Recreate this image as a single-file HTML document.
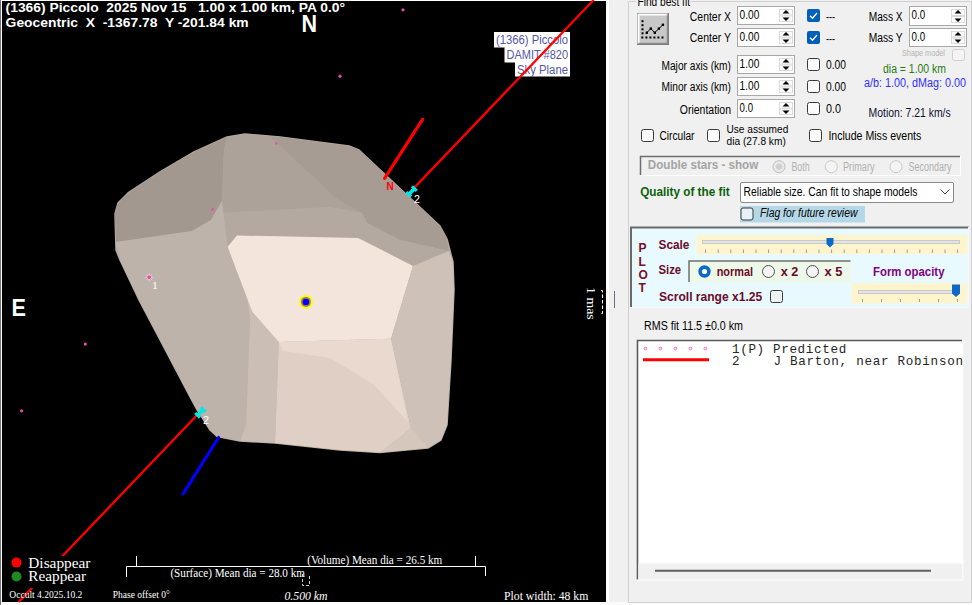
<!DOCTYPE html>
<html><head><meta charset="utf-8">
<style>
html,body{margin:0;padding:0;width:972px;height:605px;overflow:hidden;background:#f0f0f0;}
svg{display:block;}
</style></head><body>
<svg width="972" height="605" viewBox="0 0 972 605">
<rect x="0" y="0" width="606" height="605" fill="#ffffff" />
<rect x="0" y="0" width="1" height="605" fill="#7a6f7a" />
<rect x="2" y="1" width="604" height="601" fill="#000" />
<g>
<rect x="494" y="32" width="76" height="15.5" fill="#fff" />
<rect x="504.5" y="47" width="65.5" height="15.5" fill="#fff" />
<rect x="515" y="62" width="55" height="14.5" fill="#fff" />
<text x="496.00" y="44.00" font-family="Liberation Sans" font-size="12" fill="#5656a6" textLength="72.03" lengthAdjust="spacingAndGlyphs" xml:space="preserve" >(1366) Piccolo</text>
<text x="506.50" y="58.50" font-family="Liberation Sans" font-size="12" fill="#5656a6" textLength="61.50" lengthAdjust="spacingAndGlyphs" xml:space="preserve" >DAMIT #820</text>
<text x="517.00" y="73.50" font-family="Liberation Sans" font-size="12" fill="#5656a6" textLength="50.97" lengthAdjust="spacingAndGlyphs" xml:space="preserve" >Sky Plane</text>
</g>
<line x1="593.6" y1="0" x2="18.6" y2="602" stroke="#ff0000" stroke-width="2.3"/>
<g id="ast" stroke-linejoin="round">
<polygon fill="#b4a9a0" stroke="#b4a9a0" stroke-width="1.5" points="115,214 118,203 128,193 160,172 194,152 227,137 245,134 280,137 349,146 359,150 440,226 447,239 453,262 454,290 451,360 447,425 441,440 428,448 380,452.5 340,450 275,443 240,441 217,436.5 210,430 196,408 189,395 139,300 120,260 116,250"/>
<polygon fill="#a3988f" points="116,242 115,214 118,203 128,193 160,172 194,152 227,137 224,150 222,201 211,220 192,231"/>
<polygon fill="#ada29a" points="227,137 245,134 270,136.5 337,199 362,213 330,207 221,213 224,150"/>
<polygon fill="#a79c94" points="270,136.5 280,137 349,146 359,150 440,226 447,239 449,251 400,240 367,223 362,213 337,199"/>
<polygon fill="#b4a9a1" points="221,213 330,207 362,213 367,223 400,240 449,251 413,266 376,247 358,238 237,235.5 227.6,246.7"/>
<polygon fill="#beb3aa" points="116,242 192,231 211,220 222,201 227.6,246.7 246,290 250,318 246,425 240,441 217,436.5 210,430 196,408 189,395 139,300 120,260"/>
<polygon fill="#cbbeb4" points="252.4,312 278.8,342 275,443 240,441 246,425 250,318 246,290"/>
<polygon fill="#f4e5dc" points="227.6,246.7 237,235.5 358,238 376,247 413,266 391,338.7 278.8,342 252.4,312"/>
<polygon fill="#dfcfc5" points="278.8,342 391,338.7 411,428 397,440 380,452.5 340,450 275,443"/>
<polygon fill="#e9d9cf" points="278.8,342 391,338.7 408,422 373,384 330,358 283,351"/>
<polygon fill="#cec1b7" points="413,266 449,251 453,262 454,290 451,360 447,425 441,440 428,448 397,440 411,428 391,338.7"/>
<polygon fill="#d6c7bd" points="397,440 411,428 428,448 380,452.5"/>
</g>

<g fill="#e050a8"><circle cx="403" cy="9.8" r="1.6"/><circle cx="340" cy="76.2" r="1.6"/><circle cx="85.3" cy="344.1" r="1.6"/><circle cx="21.6" cy="410.8" r="1.6"/><circle cx="276.3" cy="143.5" r="1.3"/><circle cx="212.7" cy="209.4" r="1.3"/></g>
<line x1="422.7" y1="119.2" x2="384.6" y2="178.4" stroke="#ff0000" stroke-width="3.2" stroke-linecap="round"/>
<text x="386.60" y="190.00" font-family="Liberation Sans" font-size="10" fill="#ff0000" font-weight="bold" textLength="7.22" lengthAdjust="spacingAndGlyphs" xml:space="preserve" >N</text>
<line x1="218.6" y1="437.5" x2="183" y2="494" stroke="#0000ff" stroke-width="3.2" stroke-linecap="round"/>
<g fill="#00e8e8"><g transform="translate(411.6,191.4) rotate(-46)"><rect x="-4.5" y="-1.8" width="9" height="3.6"/><rect x="-5.5" y="-3.3" width="3" height="6.6"/><rect x="2.5" y="-3.3" width="3" height="6.6"/></g><g transform="translate(200.4,412.4) rotate(-46)"><rect x="-4.5" y="-1.8" width="9" height="3.6"/><rect x="-5.5" y="-3.3" width="3" height="6.6"/><rect x="2.5" y="-3.3" width="3" height="6.6"/></g></g>
<text x="414.00" y="202.60" font-family="Liberation Sans" font-size="10" fill="#fff" textLength="5.91" lengthAdjust="spacingAndGlyphs" xml:space="preserve" >2</text>
<text x="203.00" y="424.00" font-family="Liberation Sans" font-size="10" fill="#fff" textLength="6.01" lengthAdjust="spacingAndGlyphs" xml:space="preserve" >2</text>
<g transform="translate(149.2,277.3)" stroke="#f0d0f0" stroke-width="0.8"><line x1="-4" y1="0" x2="4" y2="0"/><line x1="-3" y1="-3" x2="3" y2="3"/><line x1="-3" y1="3" x2="3" y2="-3"/><line x1="0" y1="-4" x2="0" y2="4"/></g><circle cx="149.2" cy="277.3" r="1.8" fill="#ff40a0"/>
<text x="152.00" y="288.80" font-family="Liberation Serif" font-size="11" fill="#fff" textLength="5.80" lengthAdjust="spacingAndGlyphs" xml:space="preserve" >1</text>
<circle cx="305.9" cy="301.9" r="7" fill="#ffff00"/><circle cx="305.9" cy="301.9" r="5" fill="#a07868"/><circle cx="305.9" cy="301.9" r="3.2" fill="#0000ff"/>
<text x="5.60" y="11.50" font-family="Liberation Sans" font-size="13.5" fill="#fff" font-weight="bold" textLength="339.40" lengthAdjust="spacingAndGlyphs" xml:space="preserve" >(1366) Piccolo  2025 Nov 15   1.00 x 1.00 km, PA 0.0°</text>
<text x="5.60" y="27.40" font-family="Liberation Sans" font-size="13.5" fill="#fff" font-weight="bold" textLength="243.09" lengthAdjust="spacingAndGlyphs" xml:space="preserve" >Geocentric  X  -1367.78  Y -201.84 km</text>
<text x="301.60" y="31.70" font-family="Liberation Sans" font-size="23.5" fill="#fff" font-weight="bold" textLength="15.55" lengthAdjust="spacingAndGlyphs" xml:space="preserve" >N</text>
<text x="11.60" y="316.00" font-family="Liberation Sans" font-size="23.5" fill="#fff" font-weight="bold" textLength="14.44" lengthAdjust="spacingAndGlyphs" xml:space="preserve" >E</text>
<g transform="translate(587,287) rotate(90)">
<text x="0.00" y="0.00" font-family="Liberation Serif" font-size="12" fill="#fff" textLength="32.71" lengthAdjust="spacingAndGlyphs" xml:space="preserve" >1 mas</text>
</g>
<path d="M601,290.5 H602.5 V313.5 H601" stroke="#ffffff" stroke-width="1" fill="none" stroke-dasharray="3.5,2"/>
<rect x="8" y="556" width="90" height="32" fill="#000" />
<circle cx="16.5" cy="562.6" r="5" fill="#ff0000"/><circle cx="16.5" cy="576.5" r="5" fill="#208a20"/>
<text x="28.30" y="567.50" font-family="Liberation Serif" font-size="14" fill="#fff" textLength="62.18" lengthAdjust="spacingAndGlyphs" xml:space="preserve" >Disappear</text>
<text x="28.30" y="581.40" font-family="Liberation Serif" font-size="14" fill="#fff" textLength="57.71" lengthAdjust="spacingAndGlyphs" xml:space="preserve" >Reappear</text>
<text x="9.30" y="597.50" font-family="Liberation Serif" font-size="11" fill="#fff" textLength="73.10" lengthAdjust="spacingAndGlyphs" xml:space="preserve" >Occult 4.2025.10.2</text>
<text x="112.70" y="597.50" font-family="Liberation Serif" font-size="11" fill="#fff" textLength="57.12" lengthAdjust="spacingAndGlyphs" xml:space="preserve" >Phase offset 0°</text>
<text x="284.50" y="600.40" font-family="Liberation Serif" font-size="13" fill="#fff" font-style="italic" textLength="43.01" lengthAdjust="spacingAndGlyphs" xml:space="preserve" >0.500 km</text>
<text x="504.00" y="600.00" font-family="Liberation Serif" font-size="13" fill="#fff" textLength="84.30" lengthAdjust="spacingAndGlyphs" xml:space="preserve" >Plot width: 48 km</text>
<g stroke="#fff" stroke-width="1" fill="none"><polyline points="126.5,577 126.5,566.5 485.5,566.5 485.5,576"/><line x1="136.5" y1="556" x2="136.5" y2="566"/><line x1="475.5" y1="556" x2="475.5" y2="566"/></g>
<text x="170.40" y="577.00" font-family="Liberation Serif" font-size="12" fill="#fff" textLength="134.60" lengthAdjust="spacingAndGlyphs" xml:space="preserve" >(Surface) Mean dia = 28.0 km</text>
<text x="307.20" y="563.80" font-family="Liberation Serif" font-size="12" fill="#fff" textLength="135.09" lengthAdjust="spacingAndGlyphs" xml:space="preserve" >(Volume) Mean dia = 26.5 km</text>
<path d="M302.5,574 v11.5 h7 v-11.5" stroke="#ccc" stroke-width="1" fill="none" stroke-dasharray="3,2"/>
<rect x="606" y="0" width="366" height="605" fill="#f0f0f0" />
<rect x="606" y="0" width="3" height="602" fill="#ffffff" />
<rect x="606" y="602" width="366" height="3" fill="#fbfbfb" />
<path d="M636,1.5 H628.5 V602.5 H971.5 V1.5 H690.5" stroke="#d0d0d0" stroke-width="1" fill="none"/>
<text x="637.50" y="5.80" font-family="Liberation Sans" font-size="12" fill="#000" textLength="52.49" lengthAdjust="spacingAndGlyphs" xml:space="preserve" >Find best fit</text>
<line x1="614.5" y1="291" x2="614.5" y2="308" stroke="#6a7280" stroke-width="1"/>
<rect x="637.5" y="13.5" width="31" height="31" fill="#c8c8c8" stroke="#7a7a7a"/>
<path d="M638.5,43.5 V14.5 H667.5" stroke="#fff" stroke-width="2" fill="none"/>
<path d="M638.5,43.5 H667.5 V14.5" stroke="#8a8a8a" stroke-width="1.5" fill="none"/>
<g fill="#000"><rect x="641.5" y="20.2" width="2" height="2"/><rect x="641.5" y="24.2" width="2" height="2"/><rect x="641.5" y="28.3" width="2" height="2"/><rect x="641.5" y="32.3" width="2" height="2"/><rect x="641.3" y="36.5" width="2" height="2"/><rect x="645.4" y="36.5" width="2" height="2"/><rect x="649.4" y="36.5" width="2" height="2"/><rect x="653.4" y="36.5" width="2" height="2"/><rect x="657.4" y="36.5" width="2" height="2"/><rect x="661.5" y="36.5" width="2" height="2"/></g>
<polyline points="646.8,32.7 650.8,28.6 654.8,32.7 658.9,28.6 662.9,24.8" stroke="#000" stroke-width="1" fill="none"/>
<g fill="#000"><rect x="645.6" y="31.5" width="2.4" height="2.4"/><rect x="649.6" y="27.4" width="2.4" height="2.4"/><rect x="653.6" y="31.5" width="2.4" height="2.4"/><rect x="657.7" y="27.4" width="2.4" height="2.4"/><rect x="661.7" y="23.6" width="2.4" height="2.4"/></g>
<rect x="737.5" y="6.5" width="57" height="18" fill="#fff" stroke="#a8a8a8"/>
<rect x="779.5" y="9.5" width="13" height="5.5" fill="#fff" stroke="#dadada" stroke-width="1"/>
<rect x="779.5" y="16.0" width="13" height="5.5" fill="#fff" stroke="#dadada" stroke-width="1"/>
<path d="M782.5,13.5 L786,10 L789.5,13.5 Z" fill="#000"/>
<path d="M782.5,17.5 L786,21 L789.5,17.5 Z" fill="#000"/>
<text x="739.60" y="18.50" font-family="Liberation Sans" font-size="12" fill="#000" textLength="19.71" lengthAdjust="spacingAndGlyphs" xml:space="preserve" >0.00</text>
<rect x="737.5" y="28.5" width="57" height="18" fill="#fff" stroke="#a8a8a8"/>
<rect x="779.5" y="31.5" width="13" height="5.5" fill="#fff" stroke="#dadada" stroke-width="1"/>
<rect x="779.5" y="38.0" width="13" height="5.5" fill="#fff" stroke="#dadada" stroke-width="1"/>
<path d="M782.5,35.5 L786,32 L789.5,35.5 Z" fill="#000"/>
<path d="M782.5,39.5 L786,43 L789.5,39.5 Z" fill="#000"/>
<text x="739.60" y="40.50" font-family="Liberation Sans" font-size="12" fill="#000" textLength="19.71" lengthAdjust="spacingAndGlyphs" xml:space="preserve" >0.00</text>
<rect x="737.5" y="55.5" width="57" height="18" fill="#fff" stroke="#a8a8a8"/>
<rect x="779.5" y="58.5" width="13" height="5.5" fill="#fff" stroke="#dadada" stroke-width="1"/>
<rect x="779.5" y="65.0" width="13" height="5.5" fill="#fff" stroke="#dadada" stroke-width="1"/>
<path d="M782.5,62.5 L786,59 L789.5,62.5 Z" fill="#000"/>
<path d="M782.5,66.5 L786,70 L789.5,66.5 Z" fill="#000"/>
<text x="739.60" y="67.50" font-family="Liberation Sans" font-size="12" fill="#000" textLength="19.71" lengthAdjust="spacingAndGlyphs" xml:space="preserve" >1.00</text>
<rect x="737.5" y="77.5" width="57" height="18" fill="#fff" stroke="#a8a8a8"/>
<rect x="779.5" y="80.5" width="13" height="5.5" fill="#fff" stroke="#dadada" stroke-width="1"/>
<rect x="779.5" y="87.0" width="13" height="5.5" fill="#fff" stroke="#dadada" stroke-width="1"/>
<path d="M782.5,84.5 L786,81 L789.5,84.5 Z" fill="#000"/>
<path d="M782.5,88.5 L786,92 L789.5,88.5 Z" fill="#000"/>
<text x="739.60" y="89.50" font-family="Liberation Sans" font-size="12" fill="#000" textLength="19.71" lengthAdjust="spacingAndGlyphs" xml:space="preserve" >1.00</text>
<rect x="737.5" y="99.5" width="57" height="18" fill="#fff" stroke="#a8a8a8"/>
<rect x="779.5" y="102.5" width="13" height="5.5" fill="#fff" stroke="#dadada" stroke-width="1"/>
<rect x="779.5" y="109.0" width="13" height="5.5" fill="#fff" stroke="#dadada" stroke-width="1"/>
<path d="M782.5,106.5 L786,103 L789.5,106.5 Z" fill="#000"/>
<path d="M782.5,110.5 L786,114 L789.5,110.5 Z" fill="#000"/>
<text x="739.60" y="111.50" font-family="Liberation Sans" font-size="12" fill="#000" textLength="13.40" lengthAdjust="spacingAndGlyphs" xml:space="preserve" >0.0</text>
<rect x="909.5" y="6.5" width="57" height="19" fill="#fff" stroke="#a8a8a8"/>
<rect x="951.5" y="9.5" width="13" height="6.0" fill="#fff" stroke="#dadada" stroke-width="1"/>
<rect x="951.5" y="16.5" width="13" height="6.0" fill="#fff" stroke="#dadada" stroke-width="1"/>
<path d="M954.5,13.5 L958,10 L961.5,13.5 Z" fill="#000"/>
<path d="M954.5,18.5 L958,22 L961.5,18.5 Z" fill="#000"/>
<text x="911.60" y="18.50" font-family="Liberation Sans" font-size="12" fill="#000" textLength="13.60" lengthAdjust="spacingAndGlyphs" xml:space="preserve" >0.0</text>
<rect x="909.5" y="28.5" width="57" height="18" fill="#fff" stroke="#a8a8a8"/>
<rect x="951.5" y="31.5" width="13" height="5.5" fill="#fff" stroke="#dadada" stroke-width="1"/>
<rect x="951.5" y="38.0" width="13" height="5.5" fill="#fff" stroke="#dadada" stroke-width="1"/>
<path d="M954.5,35.5 L958,32 L961.5,35.5 Z" fill="#000"/>
<path d="M954.5,39.5 L958,43 L961.5,39.5 Z" fill="#000"/>
<text x="911.60" y="40.50" font-family="Liberation Sans" font-size="12" fill="#000" textLength="13.60" lengthAdjust="spacingAndGlyphs" xml:space="preserve" >0.0</text>
<text x="689.80" y="20.60" font-family="Liberation Sans" font-size="12" fill="#000" textLength="41.21" lengthAdjust="spacingAndGlyphs" xml:space="preserve" >Center X</text>
<text x="689.80" y="42.30" font-family="Liberation Sans" font-size="12" fill="#000" textLength="41.18" lengthAdjust="spacingAndGlyphs" xml:space="preserve" >Center Y</text>
<text x="661.50" y="69.60" font-family="Liberation Sans" font-size="12" fill="#000" textLength="69.49" lengthAdjust="spacingAndGlyphs" xml:space="preserve" >Major axis (km)</text>
<text x="661.50" y="91.40" font-family="Liberation Sans" font-size="12" fill="#000" textLength="69.49" lengthAdjust="spacingAndGlyphs" xml:space="preserve" >Minor axis (km)</text>
<text x="679.80" y="113.50" font-family="Liberation Sans" font-size="12" fill="#000" textLength="51.22" lengthAdjust="spacingAndGlyphs" xml:space="preserve" >Orientation</text>
<text x="868.70" y="20.60" font-family="Liberation Sans" font-size="12" fill="#000" textLength="33.99" lengthAdjust="spacingAndGlyphs" xml:space="preserve" >Mass X</text>
<text x="868.70" y="42.30" font-family="Liberation Sans" font-size="12" fill="#000" textLength="34.01" lengthAdjust="spacingAndGlyphs" xml:space="preserve" >Mass Y</text>
<rect x="807" y="9" width="13" height="13" rx="2" fill="#005fb8"/>
<path d="M810,15.8 L812.5,18.2 L817,13" stroke="#fff" stroke-width="1.3" fill="none"/>
<rect x="807" y="31" width="13" height="13" rx="2" fill="#005fb8"/>
<path d="M810,37.8 L812.5,40.2 L817,35" stroke="#fff" stroke-width="1.3" fill="none"/>
<text x="826.00" y="20.80" font-family="Liberation Sans" font-size="12" fill="#000" textLength="8.99" lengthAdjust="spacingAndGlyphs" xml:space="preserve" >---</text>
<text x="826.00" y="42.50" font-family="Liberation Sans" font-size="12" fill="#000" textLength="8.99" lengthAdjust="spacingAndGlyphs" xml:space="preserve" >---</text>
<rect x="807.5" y="58.5" width="12" height="12" rx="2" fill="#fbfbfb" stroke="#3a3a3a" stroke-width="1"/>
<rect x="807.5" y="80.5" width="12" height="12" rx="2" fill="#fbfbfb" stroke="#3a3a3a" stroke-width="1"/>
<rect x="807.5" y="102.5" width="12" height="12" rx="2" fill="#fbfbfb" stroke="#3a3a3a" stroke-width="1"/>
<text x="826.00" y="68.70" font-family="Liberation Sans" font-size="12" fill="#000" textLength="20.01" lengthAdjust="spacingAndGlyphs" xml:space="preserve" >0.00</text>
<text x="826.00" y="90.50" font-family="Liberation Sans" font-size="12" fill="#000" textLength="20.01" lengthAdjust="spacingAndGlyphs" xml:space="preserve" >0.00</text>
<text x="826.00" y="112.50" font-family="Liberation Sans" font-size="12" fill="#000" textLength="15.00" lengthAdjust="spacingAndGlyphs" xml:space="preserve" >0.0</text>
<text x="902.00" y="56.00" font-family="Liberation Sans" font-size="9" fill="#b4b4b4" textLength="42.99" lengthAdjust="spacingAndGlyphs" xml:space="preserve" >Shape model</text>
<rect x="952.5" y="49.5" width="12" height="11" rx="2" fill="#f4f4f4" stroke="#d0d0d0"/>
<text x="883.00" y="72.50" font-family="Liberation Sans" font-size="12" fill="#2a7a10" textLength="63.01" lengthAdjust="spacingAndGlyphs" xml:space="preserve" >dia = 1.00 km</text>
<text x="864.00" y="86.50" font-family="Liberation Sans" font-size="12" fill="#3030ff" textLength="102.01" lengthAdjust="spacingAndGlyphs" xml:space="preserve" >a/b: 1.00, dMag: 0.00</text>
<text x="868.60" y="116.50" font-family="Liberation Sans" font-size="12" fill="#101030" textLength="82.12" lengthAdjust="spacingAndGlyphs" xml:space="preserve" >Motion: 7.21 km/s</text>
<rect x="641.5" y="129.5" width="12" height="12" rx="2" fill="#fbfbfb" stroke="#3a3a3a" stroke-width="1"/>
<text x="659.50" y="139.70" font-family="Liberation Sans" font-size="12" fill="#000" textLength="35.00" lengthAdjust="spacingAndGlyphs" xml:space="preserve" >Circular</text>
<rect x="707.5" y="129.5" width="12" height="12" rx="2" fill="#fbfbfb" stroke="#3a3a3a" stroke-width="1"/>
<text x="726.50" y="133.00" font-family="Liberation Sans" font-size="10.5" fill="#000" textLength="61.79" lengthAdjust="spacingAndGlyphs" xml:space="preserve" >Use assumed</text>
<text x="726.50" y="145.40" font-family="Liberation Sans" font-size="10.5" fill="#000" textLength="59.31" lengthAdjust="spacingAndGlyphs" xml:space="preserve" >dia (27.8 km)</text>
<rect x="809.5" y="129.5" width="12" height="12" rx="2" fill="#fbfbfb" stroke="#3a3a3a" stroke-width="1"/>
<text x="828.40" y="139.70" font-family="Liberation Sans" font-size="12" fill="#000" textLength="92.92" lengthAdjust="spacingAndGlyphs" xml:space="preserve" >Include Miss events</text>
<path d="M640.5,175 V156.5 H960" stroke="#6e6e6e" stroke-width="1.5" fill="none"/>
<path d="M640.5,175.5 H960.5 V156" stroke="#ffffff" stroke-width="1" fill="none"/>
<text x="647.80" y="169.40" font-family="Liberation Sans" font-size="12" fill="#a4a4a4" font-weight="bold" textLength="110.46" lengthAdjust="spacingAndGlyphs" xml:space="preserve" >Double stars - show</text>
<circle cx="779" cy="166.7" r="6" fill="#e8e8e8" stroke="#c0c0c0" stroke-width="1"/><circle cx="779" cy="166.7" r="3" fill="#cfcfcf"/>
<circle cx="831.3" cy="166.7" r="6" fill="#f4f4f4" stroke="#c8c8c8" stroke-width="1"/>
<circle cx="896" cy="166.7" r="6" fill="#f4f4f4" stroke="#c8c8c8" stroke-width="1"/>
<text x="791.50" y="171.30" font-family="Liberation Sans" font-size="12" fill="#b0b0b0" textLength="18.12" lengthAdjust="spacingAndGlyphs" xml:space="preserve" >Both</text>
<text x="843.00" y="171.30" font-family="Liberation Sans" font-size="12" fill="#b0b0b0" textLength="31.50" lengthAdjust="spacingAndGlyphs" xml:space="preserve" >Primary</text>
<text x="908.40" y="171.30" font-family="Liberation Sans" font-size="12" fill="#b0b0b0" textLength="43.11" lengthAdjust="spacingAndGlyphs" xml:space="preserve" >Secondary</text>
<text x="640.20" y="196.40" font-family="Liberation Sans" font-size="12" fill="#0a600a" font-weight="bold" textLength="89.41" lengthAdjust="spacingAndGlyphs" xml:space="preserve" >Quality of the fit</text>
<rect x="740.5" y="182.5" width="213" height="20" rx="1.5" fill="#fff" stroke="#8a8a8a"/>
<text x="743.60" y="195.50" font-family="Liberation Sans" font-size="12" fill="#000" textLength="173.81" lengthAdjust="spacingAndGlyphs" xml:space="preserve" >Reliable size. Can fit to shape models</text>
<path d="M940.5,189.5 L945,194 L949.5,189.5" stroke="#404040" stroke-width="1" fill="none"/>
<rect x="740" y="206" width="125" height="16.5" fill="#b4d8e8" />
<rect x="741.0" y="208.0" width="12" height="12" rx="2" fill="#e8f2f6" stroke="#3a3a3a" stroke-width="1"/>
<text x="760.00" y="216.60" font-family="Liberation Sans" font-size="12" fill="#000" font-style="italic" textLength="97.41" lengthAdjust="spacingAndGlyphs" xml:space="preserve" >Flag for future review</text>
<rect x="630" y="226.5" width="339" height="81" fill="#e8fafd" />
<path d="M631,307 V227.5 H969" stroke="#6a6a6a" stroke-width="2" fill="none"/>
<path d="M631,307.5 H968.5 V227" stroke="#f8f8f8" stroke-width="1" fill="none"/>
<text x="638.50" y="252.40" font-family="Liberation Sans" font-size="12" fill="#7a0a2a" font-weight="bold" xml:space="preserve" >P</text>
<text x="638.50" y="265.90" font-family="Liberation Sans" font-size="12" fill="#7a0a2a" font-weight="bold" xml:space="preserve" >L</text>
<text x="638.50" y="279.20" font-family="Liberation Sans" font-size="12" fill="#7a0a2a" font-weight="bold" xml:space="preserve" >O</text>
<text x="638.50" y="292.20" font-family="Liberation Sans" font-size="12" fill="#7a0a2a" font-weight="bold" xml:space="preserve" >T</text>
<text x="658.50" y="248.90" font-family="Liberation Sans" font-size="12" fill="#6a0a2a" font-weight="bold" textLength="30.88" lengthAdjust="spacingAndGlyphs" xml:space="preserve" >Scale</text>
<text x="658.50" y="274.40" font-family="Liberation Sans" font-size="12" fill="#6a0a2a" font-weight="bold" textLength="22.61" lengthAdjust="spacingAndGlyphs" xml:space="preserve" >Size</text>
<text x="659.00" y="300.70" font-family="Liberation Sans" font-size="12" fill="#6a0a2a" font-weight="bold" textLength="103.20" lengthAdjust="spacingAndGlyphs" xml:space="preserve" >Scroll range x1.25</text>
<text x="873.00" y="275.80" font-family="Liberation Sans" font-size="12" fill="#800080" font-weight="bold" textLength="71.49" lengthAdjust="spacingAndGlyphs" xml:space="preserve" >Form opacity</text>
<rect x="697" y="235" width="270" height="19" fill="#fff5cc" />
<rect x="702.5" y="240.5" width="257" height="3" fill="#e4e4e4" stroke="#c8c8c8" stroke-width="1"/>
<line x1="705.6" y1="249.5" x2="705.6" y2="253" stroke="#a890b8"/><line x1="718.2" y1="249.5" x2="718.2" y2="253" stroke="#a890b8"/><line x1="730.8" y1="249.5" x2="730.8" y2="253" stroke="#a890b8"/><line x1="743.4" y1="249.5" x2="743.4" y2="253" stroke="#a890b8"/><line x1="756.0" y1="249.5" x2="756.0" y2="253" stroke="#a890b8"/><line x1="768.6" y1="249.5" x2="768.6" y2="253" stroke="#a890b8"/><line x1="781.2" y1="249.5" x2="781.2" y2="253" stroke="#a890b8"/><line x1="793.8" y1="249.5" x2="793.8" y2="253" stroke="#a890b8"/><line x1="806.4" y1="249.5" x2="806.4" y2="253" stroke="#a890b8"/><line x1="819.0" y1="249.5" x2="819.0" y2="253" stroke="#a890b8"/><line x1="831.6" y1="249.5" x2="831.6" y2="253" stroke="#a890b8"/><line x1="844.2" y1="249.5" x2="844.2" y2="253" stroke="#a890b8"/><line x1="856.8" y1="249.5" x2="856.8" y2="253" stroke="#a890b8"/><line x1="869.4" y1="249.5" x2="869.4" y2="253" stroke="#a890b8"/><line x1="882.0" y1="249.5" x2="882.0" y2="253" stroke="#a890b8"/><line x1="894.6" y1="249.5" x2="894.6" y2="253" stroke="#a890b8"/><line x1="907.2" y1="249.5" x2="907.2" y2="253" stroke="#a890b8"/><line x1="919.8" y1="249.5" x2="919.8" y2="253" stroke="#a890b8"/><line x1="932.4" y1="249.5" x2="932.4" y2="253" stroke="#a890b8"/><line x1="945.0" y1="249.5" x2="945.0" y2="253" stroke="#a890b8"/><line x1="957.6" y1="249.5" x2="957.6" y2="253" stroke="#a890b8"/>
<path d="M826.5,238 h7 v6 l-3.5,3.5 l-3.5,-3.5 Z" fill="#0a6ac8"/>
<rect x="688.5" y="260.5" width="162" height="21.5" fill="#eef8e8"/>
<path d="M689,282 V261 H850.5" stroke="#707070" stroke-width="1.5" fill="none"/>
<circle cx="704.5" cy="271.5" r="6.2" fill="#0a6ac8"/><circle cx="704.5" cy="271.5" r="2.6" fill="#fff"/>
<text x="716.70" y="275.50" font-family="Liberation Sans" font-size="12" fill="#6a0a2a" font-weight="bold" textLength="36.29" lengthAdjust="spacingAndGlyphs" xml:space="preserve" >normal</text>
<circle cx="768.5" cy="271.5" r="6" fill="#f4f4f4" stroke="#505050" stroke-width="1"/>
<text x="780.70" y="275.50" font-family="Liberation Sans" font-size="12" fill="#6a0a2a" font-weight="bold" textLength="17.70" lengthAdjust="spacingAndGlyphs" xml:space="preserve" >x 2</text>
<circle cx="812.5" cy="271.5" r="6" fill="#f4f4f4" stroke="#505050" stroke-width="1"/>
<text x="824.60" y="275.50" font-family="Liberation Sans" font-size="12" fill="#6a0a2a" font-weight="bold" textLength="17.80" lengthAdjust="spacingAndGlyphs" xml:space="preserve" >x 5</text>
<rect x="770.5" y="290.5" width="12" height="12" rx="2" fill="#eef4f4" stroke="#3a3a3a" stroke-width="1"/>
<rect x="852" y="283.3" width="115" height="20" fill="#fff5cc" />
<rect x="858.5" y="290.5" width="101" height="3" fill="#e4e4e4" stroke="#c8c8c8" stroke-width="1"/>
<line x1="862.5" y1="299" x2="862.5" y2="302" stroke="#a0a0a0"/><line x1="881.5" y1="299" x2="881.5" y2="302" stroke="#a0a0a0"/><line x1="900.5" y1="299" x2="900.5" y2="302" stroke="#a0a0a0"/><line x1="919.5" y1="299" x2="919.5" y2="302" stroke="#a0a0a0"/><line x1="938.5" y1="299" x2="938.5" y2="302" stroke="#a0a0a0"/><line x1="957.5" y1="299" x2="957.5" y2="302" stroke="#a0a0a0"/>
<path d="M952,284.6 h8 v9 l-4,3.5 l-4,-3.5 Z" fill="#0a6ac8"/>
<text x="644.00" y="329.60" font-family="Liberation Sans" font-size="12" fill="#000" textLength="99.01" lengthAdjust="spacingAndGlyphs" xml:space="preserve" >RMS fit 11.5 ±0.0 km</text>
<rect x="637" y="340" width="325.5" height="239.5" fill="#fff"/>
<path d="M637.5,579.5 V340.5 H962" stroke="#5a5a5a" stroke-width="1.6" fill="none"/>
<path d="M637.5,580 H962.8 V340" stroke="#ffffff" stroke-width="1.2" fill="none"/>
<rect x="638.3" y="563.5" width="324" height="16" fill="#f0f0f0" />
<line x1="655" y1="570.8" x2="931" y2="570.8" stroke="#606060" stroke-width="2"/>
<circle cx="645.4" cy="348.5" r="1.4" fill="#ffd0ec" stroke="#ff70c8" stroke-width="0.9"/><circle cx="660.4" cy="348.5" r="1.4" fill="#ffd0ec" stroke="#ff70c8" stroke-width="0.9"/><circle cx="675.4" cy="348.5" r="1.4" fill="#ffd0ec" stroke="#ff70c8" stroke-width="0.9"/><circle cx="690.4" cy="348.5" r="1.4" fill="#ffd0ec" stroke="#ff70c8" stroke-width="0.9"/><circle cx="705.4" cy="348.5" r="1.4" fill="#ffd0ec" stroke="#ff70c8" stroke-width="0.9"/>
<line x1="643" y1="359.7" x2="709" y2="359.7" stroke="#ff0000" stroke-width="3"/>
<text x="732" y="352.8" font-family="Liberation Mono" font-size="12.6" fill="#262626" textLength="114.2" lengthAdjust="spacing" xml:space="preserve">1(P) Predicted</text>
<text x="732" y="365" font-family="Liberation Mono" font-size="12.6" fill="#262626" textLength="231" lengthAdjust="spacing" xml:space="preserve">2    J Barton, near Robinson</text>
</svg>
</body></html>
